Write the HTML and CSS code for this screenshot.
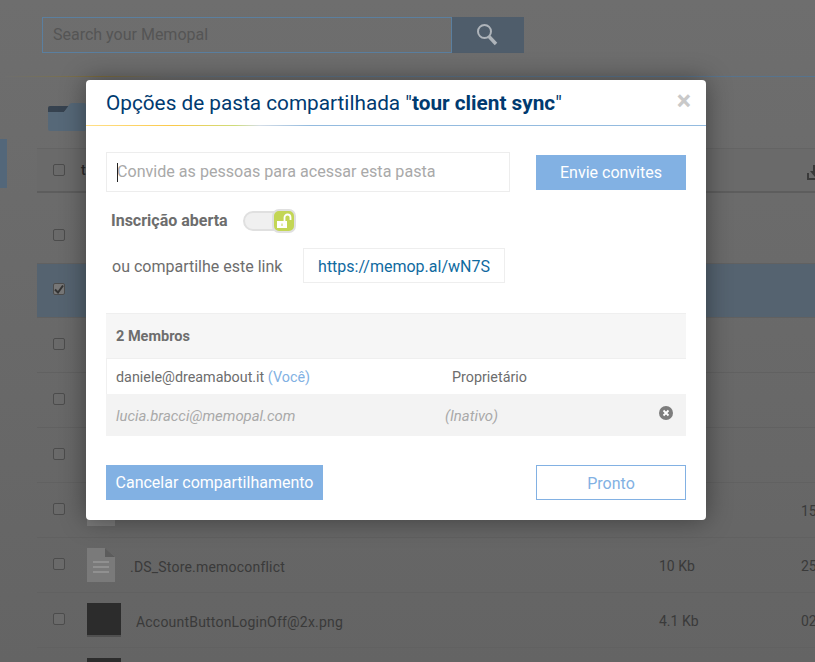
FILE: index.html
```html
<!DOCTYPE html>
<html lang="pt">
<head>
<meta charset="UTF-8">
<meta name="viewport" content="width=device-width, initial-scale=1.0">
<title>Memopal</title>
<link rel="stylesheet" href="styles.css">
</head>
<body>
<div class="page">
  <div class="sidebar"><div class="side-active"></div></div>
  <div class="main">
    <div class="search-row">
      <div class="search-box">Search your Memopal</div>
      <div class="search-btn">
        <svg width="24" height="24" viewBox="0 0 24 24"><circle cx="9.500" cy="9.500" r="6.500" fill="none" stroke="#aeb4ba" stroke-width="2"/><path d="M14 14.500l7 7.500" stroke="#aeb4ba" stroke-width="3.400" fill="none"/></svg>
      </div>
    </div>
    <div class="rainbow rainbow-page"></div>
    <div class="folder-row">
      <svg width="38" height="28" viewBox="0 0 38 28"><path d="M0 9V5q0-2 2-2h20l-6 6z" fill="#36424f"/><path d="M0 9h16l5-7q1-2 3-2h12q2 0 2 2v24q0 2-2 2H2q-2 0-2-2z" fill="#566878"/></svg>
    </div>
    <div class="table">
      <div class="row row-head"><span class="check"></span><span class="name name-head">t</span><svg class="dl" width="16" height="18" viewBox="0 0 16 18"><path d="M1 10v6h14" fill="none" stroke="#3a3a3a" stroke-width="2"/><path d="M6 2h4v6h3l-5 6-5-6h3z" fill="#3a3a3a"/></svg></div>
      <div class="row"><span class="check"></span></div>
      <div class="row row-sel"><span class="check check-on"><svg width="10" height="10" viewBox="0 0 10 10"><path d="M1 5.500l3 3 5-7" fill="none" stroke="#333" stroke-width="2"/></svg></span></div>
      <div class="row"><span class="check"></span></div>
      <div class="row"><span class="check"></span></div>
      <div class="row"><span class="check"></span></div>
      <div class="row"><span class="check"></span><span class="thumb-file"></span><span class="date">15</span></div>
      <div class="row">
        <span class="check"></span>
        <svg class="file" width="28" height="34" viewBox="0 0 28 34"><path d="M0 0h18l10 9v25H0z" fill="#7a7a7a"/><path d="M18 0l10 9H18z" fill="#5c5c5c"/><path d="M6 13h16v2H6zM6 18h16v2H6zM6 23h16v2H6z" fill="#909090"/></svg>
        <span class="name name-conflict">.DS_Store.memoconflict</span>
        <span class="size">10 Kb</span><span class="date">25</span>
      </div>
      <div class="row">
        <span class="check"></span>
        <span class="thumb"></span>
        <span class="name">AccountButtonLoginOff@2x.png</span>
        <span class="size">4.1 Kb</span><span class="date">02</span>
      </div>
      <div class="row"><span class="check"></span><span class="thumb"></span></div>
    </div>
  </div>
</div>

<div class="modal">
  <div class="modal-head">
    <h2>Opções de pasta compartilhada "<b>tour client sync</b>"</h2>
    <span class="close">×</span>
  </div>
  <div class="rainbow"></div>
  <div class="modal-body">
    <div class="invite-row">
      <div class="invite-input"><span class="caret"></span>Convide as pessoas para acessar esta pasta</div>
      <button class="btn btn-send">Envie convites</button>
    </div>
    <div class="open-row">
      <span class="open-label">Inscrição aberta</span>
      <span class="toggle">
        <span class="knob">
          <svg width="16" height="16" viewBox="0 0 16 16"><path d="M1 8h10v7H1z" fill="#fff"/><path d="M8.500 8V4.500a3 3 0 0 1 6 0V7" fill="none" stroke="#fff" stroke-width="1.800"/><path d="M5.500 10.500h1v2.500h-1z" fill="#c3d655"/></svg>
        </span>
      </span>
    </div>
    <div class="link-row">
      <span class="link-label">ou compartilhe este link</span>
      <span class="link-box">https://memop.al/wN7S</span>
    </div>
    <div class="members">
      <div class="members-head">2 Membros</div>
      <div class="member">
        <span class="member-mail">daniele@dreamabout.it <span class="you">(Você)</span></span>
        <span class="member-role">Proprietário</span>
      </div>
      <div class="member member-off">
        <span class="member-mail">lucia.bracci@memopal.com</span>
        <span class="member-role">(Inativo)</span>
        <svg class="remove" width="14" height="14" viewBox="0 0 14 14"><circle cx="7" cy="7" r="7" fill="#7d7d7d"/><path d="M4.500 4.500l5 5M9.500 4.500l-5 5" stroke="#fff" stroke-width="1.800"/></svg>
      </div>
    </div>
    <div class="foot-row">
      <button class="btn btn-cancel">Cancelar compartilhamento</button>
      <button class="btn-done">Pronto</button>
    </div>
  </div>
</div>
</body>
</html>
```

FILE: styles.css
```css
* { box-sizing: border-box; }
html, body { margin: 0; height: 100%; overflow: hidden; }
body { font-family: Roboto, "Liberation Sans", sans-serif; background: linear-gradient(#6e6e6e, #646464); color: #333; }

.page { display: flex; height: 662px; overflow: hidden; }
.sidebar { width: 37px; flex: none; padding-top: 139px; }
.side-active { width: 7px; height: 49px; background: #53677a; }
.main { flex: 1; min-width: 0; }

.search-row { display: flex; margin: 17px 0 0 5px; }
.search-box { width: 410px; height: 36px; border: 1px solid #5b7f9f; padding: 0 10px; font-size: 16px; line-height: 34px; color: #555; }
.search-btn { width: 72px; height: 36px; background: #4f5d6b; display: flex; align-items: center; justify-content: center; padding-right: 2px; padding-bottom: 2px; }

.rainbow { height: 1px; background: linear-gradient(to right, #ffe08a 0, #fbc94a 14%, #cfdc7a 24%, #d5dde6 28%, #94bbdf 36%, #94bbdf 100%); }
.rainbow-page { margin: 23px 0 0 -32px; background: linear-gradient(to right, #6e6e6e 0, #75705a 5%, #7d6c3c 12%, #6a6e70 20%, #5f7285 30%, #56748f 100%); }

.folder-row { height: 71px; padding: 26px 0 0 11px; }

.row { position: relative; display: flex; align-items: center; height: 55px; padding: 0 0 3px 16px; border-bottom: 1px solid #616161; font-size: 14px; color: #3a3a3a; }
.row-head { height: 45px; margin-bottom: 16px; padding-bottom: 1px; background: #6a6a6a; border-top: 1px solid #646464; border-bottom: 2px solid #5d5d5d; }
.row-sel { background: #556370; height: 54px; }
.check { width: 12px; height: 12px; flex: none; border: 1px solid #4c4c4c; border-radius: 2px; background: #6a6a6a; display: flex; align-items: center; justify-content: center; }
.check-on { background: #777; }
.name { margin-left: 15px; letter-spacing: 0.2px; position: relative; top: 3px; }
.name-head { margin-left: 16px; color: #2a2a2a; font-weight: 500; top: 0; }
.file { margin-left: 22px; flex: none; position: relative; top: 1px; }
.thumb { width: 34px; height: 34px; margin-left: 22px; flex: none; background: #2c2c2c; border-bottom: 2px solid #505050; position: relative; top: 1px; }
.thumb-file { width: 28px; height: 34px; margin-left: 22px; background: #7a7a7a; }
.size { position: absolute; left: 622px; margin-top: 4px; }
.date { position: absolute; left: 764px; margin-top: 4px; }
.dl { position: absolute; left: 770px; top: 14px; }

.modal { position: absolute; left: 86px; top: 80px; width: 620px; height: 440px; background: #fff; border-radius: 4px; box-shadow: 0 0 26px rgba(0, 0, 0, 0.4); }
.modal-head { display: flex; justify-content: space-between; height: 45px; padding: 9px 15px 0 20px; }
.modal-head h2 { margin: 0; font-size: 20.750px; line-height: 28px; font-weight: 400; color: #003a70; }
.modal-head b { font-weight: 700; }
.close { font-size: 27px; line-height: 24px; font-weight: 700; color: #c9c9c9; }

.modal-body { padding: 26px 20px 0; }
.invite-row { display: flex; justify-content: space-between; align-items: flex-start; }
.invite-input { width: 404px; height: 40px; border: 1px solid #ededed; padding-left: 10px; font-size: 16.100px; line-height: 37px; color: #a9a9a9; position: relative; }
.caret { position: absolute; left: 10px; top: 10px; width: 1px; height: 19px; background: #222; }
.btn { border: 0; background: #82b1e3; color: #fff; font-family: inherit; font-weight: 400; font-size: 16px; height: 35px; padding: 0; }
.btn-send { width: 150px; margin-top: 3px; }

.open-row { display: flex; align-items: center; height: 28px; margin-top: 15px; padding-left: 5px; }
.open-label { font-size: 16px; font-weight: 700; color: #6d6d6d; width: 132px; padding-bottom: 2px; }
.toggle { position: relative; width: 50px; height: 20px; border: 2px solid #e0e0e0; border-radius: 10px; background: #f0f0f0; }
.knob { position: absolute; right: -5px; top: -4px; width: 24px; height: 24px; border: 2px solid #e0e0e0; border-radius: 7px; background: #c3d655; display: flex; align-items: center; justify-content: center; }

.link-row { display: flex; align-items: center; margin-top: 13px; padding-left: 6px; }
.link-label { font-size: 16px; color: #6d6d6d; width: 191px; padding-top: 2px; }
.link-box { width: 202px; height: 35px; border: 1px solid #eeeeee; font-size: 16px; line-height: 35px; text-align: center; color: #0f6a9f; }

.members { margin-top: 30px; border-top: 1px solid #efefef; }
.members-head { height: 45px; background: #f6f6f6; border-bottom: 1px solid #efefef; padding-left: 10px; font-size: 14.500px; line-height: 46px; font-weight: 700; color: #6d6d6d; }
.member { position: relative; height: 35px; padding-left: 9px; font-size: 14.350px; line-height: 37px; color: #6d6d6d; border-left: 1px solid #f0f0f0; }
.member-off { height: 42px; line-height: 44px; padding-left: 10px; background: #f3f3f3; color: #a9a9a9; font-style: italic; border-left: 0; font-size: 14.900px; }
.you { color: #82b1e3; }
.member-role { position: absolute; left: 345px; }
.member-off .member-role { left: 339px; }
.remove { position: absolute; left: 553px; top: 12px; }

.foot-row { display: flex; justify-content: space-between; margin-top: 29px; }
.btn-cancel { width: 217px; }
.btn-done { width: 150px; height: 35px; background: #fff; border: 1px solid #82b1e3; color: #82b1e3; font-family: inherit; font-size: 16px; padding: 2px 0 0 0; }
```
